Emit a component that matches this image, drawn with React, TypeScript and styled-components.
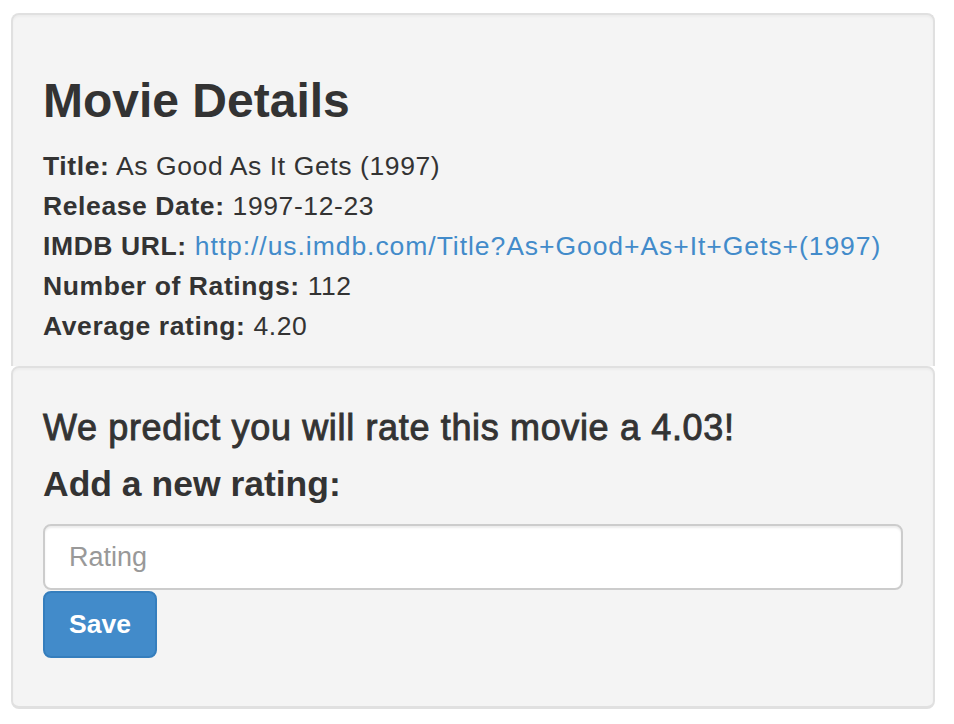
import React from 'react';
import styled, { createGlobalStyle } from 'styled-components';

const GlobalStyle = createGlobalStyle`
    html, body {
        margin: 0;
        padding: 0;
        background: #ffffff;
    }
    body {
        font-family: "Liberation Sans", Arial, Helvetica, sans-serif;
        color: #333333;
    }
`;

const Page = styled.div`
    width: 924px;
    margin: 13px 0 0 11px;
`;

const Well = styled.div<{ $first?: boolean }>`
    background: #f4f4f4;
    border: 2px solid #e0e0e0;
    border-radius: ${props => (props.$first ? '8px 8px 0 0' : '8px')};
    border-bottom-width: ${props => (props.$first ? '0' : '3px')};
    padding: ${props => (props.$first ? '30px 30px 20px' : '40px 30px 48px')};
    box-shadow: inset 0 2px 2px rgba(0, 0, 0, 0.03);
`;

const Heading = styled.h2`
    margin: 30px 0 18px;
    font-size: 48px;
    line-height: 1.1;
    font-weight: 700;
    color: #333333;
`;

const InfoRow = styled.div`
    font-size: 26.5px;
    line-height: 40px;
    letter-spacing: 0.6px;
`;

const Key = styled.b`
    font-weight: 700;
`;

const Link = styled.a`
    color: #428bca;
    text-decoration: none;
    letter-spacing: 0.95px;
`;

const Prediction = styled.h3`
    margin: 0 0 17px;
    font-size: 36px;
    line-height: 1.1;
    font-weight: 400;
    letter-spacing: 0.65px;
    -webkit-text-stroke: 0.9px #333333;
`;

const Label = styled.label`
    display: block;
    margin-bottom: 20px;
    font-size: 35.5px;
    line-height: 40px;
    font-weight: 700;
`;

const Input = styled.input`
    display: block;
    box-sizing: border-box;
    width: 100%;
    height: 66px;
    margin: 0 0 1px;
    padding: 0 24px;
    font-family: "Liberation Sans", Arial, sans-serif;
    font-size: 27px;
    color: #555555;
    background: #ffffff;
    border: 2px solid #cccccc;
    border-radius: 8px;
    box-shadow: inset 0 2px 2px rgba(0, 0, 0, 0.075);
    outline: none;

    &::placeholder {
        color: #999999;
    }
`;

const Button = styled.button`
    box-sizing: border-box;
    height: 67px;
    padding: 0 24px;
    font-family: "Liberation Sans", Arial, sans-serif;
    font-size: 26.5px;
    font-weight: 700;
    color: #ffffff;
    background: #428bca;
    border: 2px solid #357ebd;
    border-radius: 8px;
    cursor: pointer;
`;

const movie = {
    title: 'As Good As It Gets (1997)',
    releaseDate: '1997-12-23',
    url: 'http://us.imdb.com/Title?As+Good+As+It+Gets+(1997)',
    ratings: 112,
    average: '4.20',
    predicted: '4.03',
};

export default function App() {
    return (
        <>
            <GlobalStyle />
            <Page>
                <Well $first>
                    <Heading>Movie Details</Heading>
                    <InfoRow><Key>Title:</Key> {movie.title}</InfoRow>
                    <InfoRow><Key>Release Date:</Key> {movie.releaseDate}</InfoRow>
                    <InfoRow>
                        <Key>IMDB URL:</Key> <Link href={movie.url}>{movie.url}</Link>
                    </InfoRow>
                    <InfoRow><Key>Number of Ratings:</Key> {movie.ratings}</InfoRow>
                    <InfoRow><Key>Average rating:</Key> {movie.average}</InfoRow>
                </Well>
                <Well>
                    <Prediction>We predict you will rate this movie a {movie.predicted}!</Prediction>
                    <Label htmlFor="rating">Add a new rating:</Label>
                    <Input id="rating" type="text" placeholder="Rating" />
                    <Button type="button">Save</Button>
                </Well>
            </Page>
        </>
    );
}
